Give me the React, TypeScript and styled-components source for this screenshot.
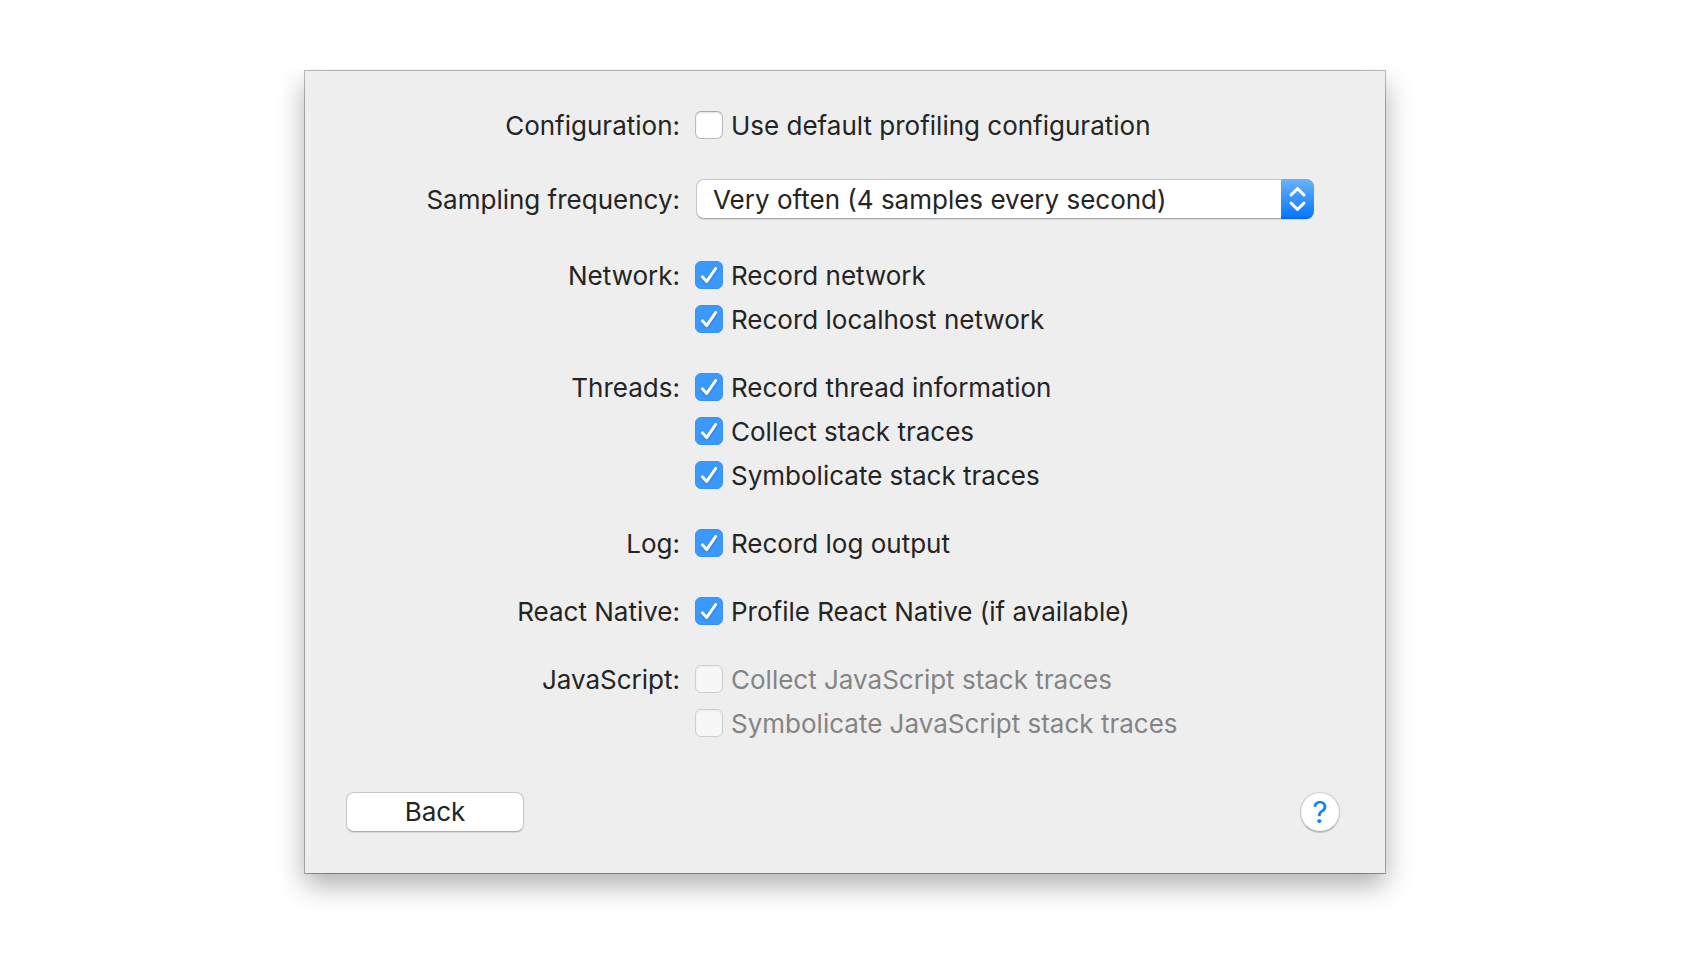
import React, { useId, useState } from "react";
import styled, { createGlobalStyle, css } from "styled-components";

const GlobalStyle = createGlobalStyle`
  *, *::before, *::after { box-sizing: border-box; }
  body {
    margin: 0;
    background: #fff;
    color: #242424;
    font: 26px/30px Inter, "Liberation Sans", sans-serif;
  }
  button, select, input { font: inherit; color: inherit; margin: 0; }
`;

const Page = styled.main`
  display: flex;
  justify-content: center;
  padding: 71px 32px 88px;
`;

const Panel = styled.form`
  flex: 0 1 1080px;
  min-width: 0;
  padding: 40px 45px 41px 41px;
  background: #eee;
  box-shadow:
    0 0 0 1px rgba(0, 0, 0, 0.26),
    0 1px 0 0 rgba(0, 0, 0, 0.12),
    0 12px 26px rgba(0, 0, 0, 0.32);
  clip-path: inset(-2px -60px -80px -60px);
`;

const Settings = styled.div`
  display: flex;
  flex-direction: column;
  gap: 38px;
`;

const Row = styled.div`
  display: grid;
  grid-template-columns: 334px minmax(0, 1fr);
  column-gap: 15px;
  align-items: start;
`;

const SelectRow = styled(Row)`
  margin-bottom: 2px;
`;

const rowTitle = css`
  text-align: right;
  white-space: nowrap;
`;

const GroupTitle = styled.span`
  ${rowTitle}
`;

const FieldTitle = styled.label`
  ${rowTitle}
  line-height: 42px;
`;

const Options = styled.div`
  display: flex;
  flex-direction: column;
  align-items: flex-start;
  gap: 14px;
`;

const Option = styled.label<{ $disabled?: boolean }>`
  display: flex;
  align-items: flex-start;
  gap: 8px;
  white-space: nowrap;
  color: ${(p) => (p.$disabled ? "#848484" : "inherit")};
`;

const BoxWrap = styled.span`
  display: grid;
  width: 28px;
  height: 28px;

  > * { grid-area: 1 / 1; }
`;

const Box = styled.input`
  appearance: none;
  width: 28px;
  height: 28px;
  border: 1px solid #bcbcbc;
  border-top-color: #a9a9a9;
  border-radius: 6px;
  background: #fff;
  box-shadow: inset 0 1px 2px rgba(0, 0, 0, 0.12);

  &:checked {
    border-color: #3792fb;
    background: #3b99fc;
    box-shadow: none;
  }
  &:disabled {
    border-color: #cfcfcf;
    background: #f7f7f7;
    box-shadow: inset 0 1px 2px rgba(0, 0, 0, 0.06);
  }
`;

const Tick = styled.svg`
  width: 28px;
  height: 28px;
  pointer-events: none;
  filter: drop-shadow(0 1px 1px rgba(0, 40, 110, 0.35));
`;

const SelectWrap = styled.div`
  display: grid;
  max-width: 618px;
  margin-left: 1px;

  > * { grid-area: 1 / 1; }
`;

const Select = styled.select`
  appearance: none;
  width: 100%;
  height: 40px;
  padding: 2px 48px 0 16px;
  border: 1px solid #c6c6c6;
  border-bottom-color: #acacac;
  border-radius: 8px;
  background: #fff;
  box-shadow: 0 1px 1px rgba(0, 0, 0, 0.1);
`;

const Stepper = styled.span`
  justify-self: end;
  width: 33px;
  height: 40px;
  border-radius: 0 8px 8px 0;
  background: linear-gradient(#6cb3fa, #4a9ffb 30%, #0a7bff 92%, #0064f0);
  pointer-events: none;

  svg { display: block; }
`;

const Footer = styled.footer`
  display: flex;
  justify-content: space-between;
  align-items: center;
  margin-top: 53px;
`;

const BackButton = styled.button`
  width: 178px;
  height: 40px;
  padding: 0;
  border: 1px solid #c8c8c8;
  border-bottom-color: #acacac;
  border-radius: 8px;
  background: #fff;
  box-shadow: 0 1px 1px rgba(0, 0, 0, 0.1);
`;

const HelpButton = styled.button`
  display: grid;
  place-items: center;
  width: 40px;
  height: 40px;
  padding: 0;
  border: 1px solid #cbcbcb;
  border-bottom-color: #b4b4b4;
  border-radius: 50%;
  background: #fff;
  box-shadow: 0 1px 1px rgba(0, 0, 0, 0.18);
  color: #0a7dff;
  font-size: 30px;
`;

type Item = { text: string; on?: boolean; disabled?: boolean };

function CheckOption({ text, on = false, disabled }: Item) {
  const [checked, setChecked] = useState(on);
  return (
    <Option $disabled={disabled}>
      <BoxWrap>
        <Box
          type="checkbox"
          checked={checked}
          disabled={disabled}
          onChange={(e) => setChecked(e.target.checked)}
        />
        {checked && (
          <Tick viewBox="0 0 28 28" aria-hidden="true">
            <path
              d="M7.4 15.8 11.6 20.6 20.6 7.6"
              fill="none"
              stroke="#fff"
              strokeWidth="3"
              strokeLinecap="round"
              strokeLinejoin="round"
            />
          </Tick>
        )}
      </BoxWrap>
      {text}
    </Option>
  );
}

function CheckGroup({ title, items }: { title: string; items: Item[] }) {
  const id = useId();
  return (
    <Row role="group" aria-labelledby={id}>
      <GroupTitle id={id}>{title}</GroupTitle>
      <Options>
        {items.map((item) => (
          <CheckOption key={item.text} {...item} />
        ))}
      </Options>
    </Row>
  );
}

const groups: { title: string; items: Item[] }[] = [
  {
    title: "Network:",
    items: [
      { text: "Record network", on: true },
      { text: "Record localhost network", on: true },
    ],
  },
  {
    title: "Threads:",
    items: [
      { text: "Record thread information", on: true },
      { text: "Collect stack traces", on: true },
      { text: "Symbolicate stack traces", on: true },
    ],
  },
  { title: "Log:", items: [{ text: "Record log output", on: true }] },
  {
    title: "React Native:",
    items: [{ text: "Profile React Native (if available)", on: true }],
  },
  {
    title: "JavaScript:",
    items: [
      { text: "Collect JavaScript stack traces", disabled: true },
      { text: "Symbolicate JavaScript stack traces", disabled: true },
    ],
  },
];

export default function App() {
  return (
    <>
      <GlobalStyle />
      <Page>
        <Panel onSubmit={(e) => e.preventDefault()}>
          <Settings>
            <CheckGroup
              title="Configuration:"
              items={[{ text: "Use default profiling configuration" }]}
            />
            <SelectRow>
              <FieldTitle htmlFor="frequency">Sampling frequency:</FieldTitle>
              <SelectWrap>
                <Select id="frequency">
                  <option>Very often (4 samples every second)</option>
                </Select>
                <Stepper>
                  <svg width="33" height="40" viewBox="0 0 33 40" aria-hidden="true">
                    <path
                      d="M10 16 16.5 9.7 23 16M10 24 16.5 30.3 23 24"
                      fill="none"
                      stroke="#fff"
                      strokeWidth="3"
                      strokeLinecap="round"
                      strokeLinejoin="round"
                    />
                  </svg>
                </Stepper>
              </SelectWrap>
            </SelectRow>
            {groups.map((group) => (
              <CheckGroup key={group.title} {...group} />
            ))}
          </Settings>
          <Footer>
            <BackButton type="button">Back</BackButton>
            <HelpButton type="button" aria-label="Help">?</HelpButton>
          </Footer>
        </Panel>
      </Page>
    </>
  );
}
